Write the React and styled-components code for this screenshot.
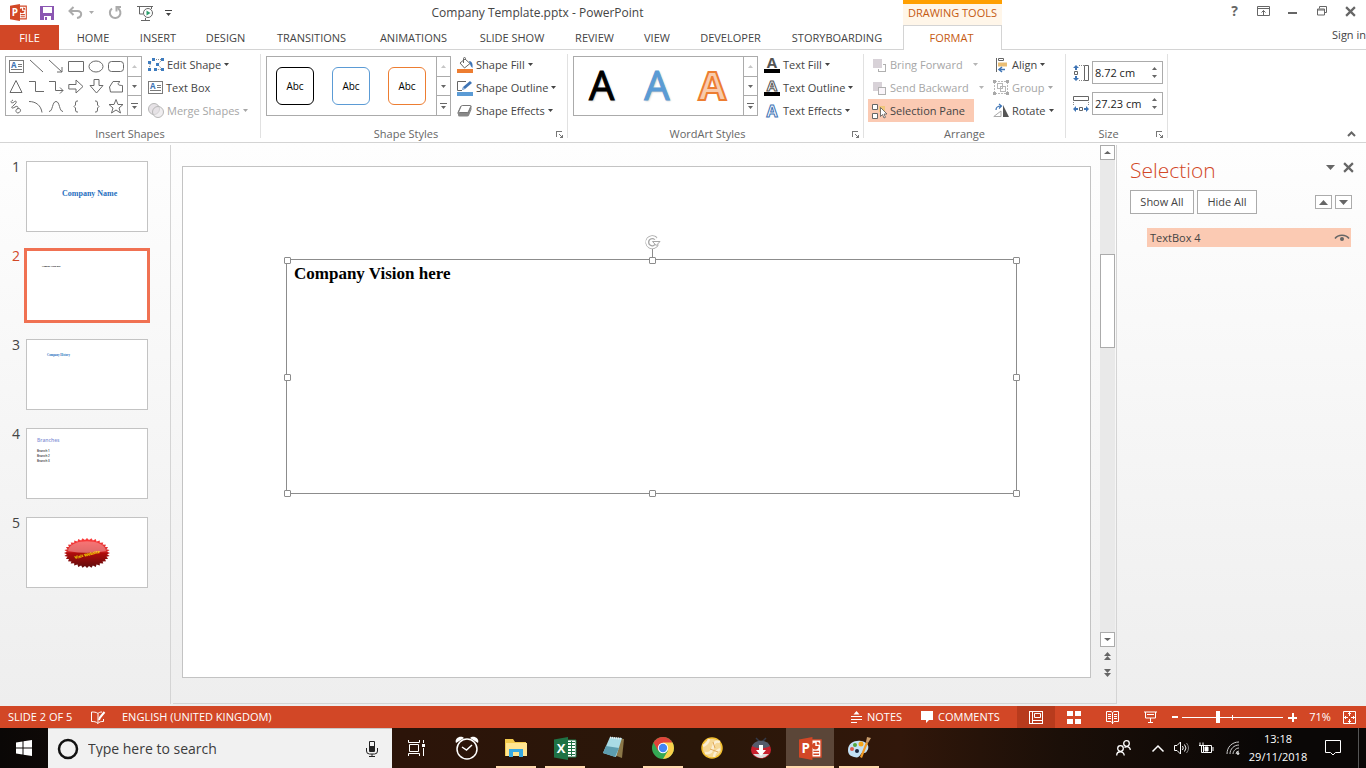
import React from 'react';
import styled, { createGlobalStyle, css } from 'styled-components';

const Global = createGlobalStyle`
  *, *::before, *::after { box-sizing: border-box; }
  html, body, #root { height: 100%; margin: 0; }
  body { font: 11px/16px "Open Sans", "Noto Sans", sans-serif; color: #444; background: #fff; overflow: hidden; }
  button, input { font: inherit; color: inherit; margin: 0; }
  button { padding: 0; border: 0; background: none; white-space: nowrap; }
  a { color: inherit; text-decoration: none; }
  h1, h2, p, ul, ol { margin: 0; padding: 0; font-weight: 400; list-style: none; }
  svg { display: block; flex: none; overflow: visible; }
`;

const Window = styled.div`
  display: flex;
  flex-direction: column;
  height: 100vh;
  overflow: hidden;
`;

/* ---------- header ---------- */
const Header = styled.header`
  display: grid;
  grid-template-columns: 903px 99px 1fr;
  grid-template-rows: 25px 25px;
  flex: none;
`;
const TitleBar = styled.div`
  display: flex;
  align-items: center;
`;
const QuickAccess = styled.div`
  display: flex;
  align-items: center;
  width: 180px;
  height: 22px;
  padding-left: 9px;
`;
const QuickButton = styled.button`
  display: flex;
  align-items: center;
  justify-content: center;
  width: ${(p) => p.$w}px;
  height: 20px;
  color: ${(p) => (p.disabled ? '#ababab' : '#444')};
`;
const DocTitle = styled.h1`
  flex: 1;
  padding-right: 8px;
  text-align: center;
  font-size: 12px;
  line-height: 25px;
`;
const ToolsLabel = styled.div`
  border-top: 4px solid #ff9f00;
  background: #fff6e9;
  color: #c55a11;
  text-align: center;
  line-height: 18px;
  white-space: nowrap;
`;
const WindowControls = styled.div`
  display: flex;
  justify-content: flex-end;
  align-items: center;
  height: 22px;
  padding-right: 1px;
`;
const ControlButton = styled.button`
  display: flex;
  align-items: center;
  justify-content: center;
  width: 29px;
  height: 22px;
  font-size: 14px;
  font-weight: 700;
  color: #666;
`;
const Tabs = styled.nav`
  display: flex;
  border-bottom: 1px solid #d4d4d4;
`;
const Tab = styled.a`
  width: ${(p) => p.$w}px;
  text-align: center;
  line-height: 25px;
  white-space: nowrap;
  ${(p) => p.$file && css`
    background: #d24726;
    color: #fff;
    margin: 0 2px -1px 0;
  `}
  ${(p) => p.$active && css`
    padding-right: 2px;
    border: 1px solid #d4d4d4;
    border-bottom: 0;
    color: #c55a11;
    line-height: 24px;
  `}
`;
const SignInBar = styled.div`
  display: flex;
  justify-content: flex-end;
  border-bottom: 1px solid #d4d4d4;
  line-height: 20px;
`;

/* ---------- ribbon ---------- */
const Ribbon = styled.section`
  display: flex;
  flex: none;
  padding-top: 3px;
  border-bottom: 1px solid #d4d4d4;
  background: #fff;
`;
const GroupBox = styled.section`
  display: flex;
  flex-direction: column;
  width: ${(p) => p.$w}px;
`;
const Separator = styled.div`
  width: 1px;
  margin: 1px 0 4px;
  background: #e1e1e1;
`;
const GroupBody = styled.div`
  display: flex;
  height: 69px;
  padding-left: ${(p) => p.$pad}px;
`;
const GroupFooter = styled.div`
  display: flex;
  height: 20px;
  line-height: 24px;
  color: #666;
`;
const GroupName = styled.h2`
  flex: 1;
  font-size: 11px;
  text-align: center;
`;
const Launcher = styled.button`
  width: 16px;
  height: 20px;
  padding: 5px 0 0 5px;
`;
const Gallery = styled.div`
  display: flex;
  height: 60px;
  margin: 3px 3px 0 0;
  border: 1px solid #ababab;
`;
const ShapeGrid = styled.div`
  display: grid;
  grid-template-columns: repeat(6, 20px);
  grid-auto-rows: 20px;
  width: 121px;
  height: 58px;
  overflow: hidden;
`;
const ShapeButton = styled.button`
  display: flex;
  align-items: center;
  justify-content: center;
  padding-bottom: 2px;
`;
const StyleRow = styled.div`
  display: flex;
  align-items: center;
  gap: 18px;
  width: 169px;
  padding-left: 9px;
`;
const StyleSample = styled.button`
  width: 38px;
  height: 38px;
  border: 1px solid ${(p) => p.$c};
  border-radius: 6px;
  color: #000;
  font-size: 10px;
  line-height: 36px;
`;
const ArtRow = styled.div`
  display: flex;
  width: 169px;
  padding-right: 3px;
`;
const ArtSample = styled.button`
  flex: 1;
  height: 58px;
  padding-bottom: 2px;
  font-size: 40px;
  line-height: 56px;
  color: ${(p) => p.$fill};
  -webkit-text-stroke: ${(p) => (p.$line ? `2px ${p.$line}` : `1px ${p.$fill}`)};
  font-weight: ${(p) => (p.$line ? 700 : 400)};
  text-shadow: ${(p) => (p.$line ? 'none' : '1px 1px 2px #bbb')};
`;
const GalleryScroll = styled.div`
  display: flex;
  flex-direction: column;
  width: 14px;
  border-left: 1px solid #ababab;
`;
const GalleryArrow = styled.button`
  display: flex;
  align-items: center;
  justify-content: center;
  flex: 1;
  color: ${(p) => (p.disabled ? '#c6c6c6' : '#666')};
  & + & { border-top: 1px solid #ababab; }
`;
const CommandColumn = styled.div`
  display: flex;
  flex-direction: column;
  align-items: flex-start;
  width: ${(p) => (p.$w ? `${p.$w}px` : 'auto')};
`;
const CommandRow = styled.div`
  display: flex;
`;
const Command = styled.button`
  display: flex;
  align-items: center;
  gap: 3px;
  height: 23px;
  padding: 0 ${(p) => (p.$on ? 9 : 3)}px 0 3px;
  color: ${(p) => (p.disabled ? '#a6a6a6' : '#444')};
  background: ${(p) => (p.$on ? '#fbcab3' : 'none')};
`;
const SplitArrow = styled.button`
  display: flex;
  align-items: center;
  height: 23px;
  padding-left: 7px;
  color: #b5b5b5;
`;
const SizeFields = styled.div`
  display: flex;
  flex-direction: column;
  gap: 8px;
  padding-top: 8px;
`;
const SizeField = styled.label`
  display: flex;
  align-items: center;
  gap: 3px;
`;
const SpinBox = styled.span`
  display: flex;
  width: 71px;
  height: 23px;
  border: 1px solid #ababab;
`;
const SizeInput = styled.input`
  width: 54px;
  padding: 0 2px;
  border: 0;
  outline: 0;
  background: none;
  color: #222;
  font-size: 11px;
`;
const Spinner = styled.span`
  display: flex;
  flex-direction: column;
  justify-content: space-evenly;
  align-items: center;
  width: 15px;
  color: #666;
`;
const CollapseArea = styled.div`
  display: flex;
  flex: 1;
  justify-content: flex-end;
  align-items: flex-end;
  padding: 0 10px 5px 0;
`;

/* ---------- workspace ---------- */
const Workspace = styled.main`
  display: flex;
  flex: 1;
  min-height: 0;
  background: linear-gradient(#fefefe, #eee);
`;
const Thumbnails = styled.ol`
  display: flex;
  flex-direction: column;
  gap: 18px;
  width: 171px;
  margin: 2px 0;
  padding: 16px 0 0;
  border-right: 1px solid #d4d4d4;
`;
const ThumbItem = styled.li`
  display: flex;
  color: ${(p) => (p.$on ? '#d24726' : '#444')};
`;
const ThumbNumber = styled.span`
  width: 26px;
  padding-right: 6px;
  text-align: right;
  font-size: 14px;
  line-height: 12px;
`;
const Thumb = styled.button`
  display: flex;
  flex-direction: column;
  align-items: flex-start;
  width: 122px;
  height: 71px;
  padding: ${(p) => p.$pad || '0'};
  border: 1px solid ${(p) => (p.$on ? '#f07152' : '#c3c3c3')};
  box-shadow: ${(p) => (p.$on ? '0 0 0 2px #f07152' : 'none')};
  background: #fff;
`;
const ThumbText = styled.span`
  font-family: ${(p) => (p.$sans ? '"Open Sans", sans-serif' : '"Liberation Serif", serif')};
  font-weight: ${(p) => (p.$sans ? 600 : 700)};
  font-size: ${(p) => p.$s}px;
  line-height: ${(p) => p.$lh}px;
  color: ${(p) => p.$c};
`;
const Editor = styled.section`
  display: flex;
  flex: 1;
  min-width: 0;
  margin: 2px 0 2px 2px;
  border-bottom: 1px solid #d4d4d4;
  border-right: 1px solid #d4d4d4;
`;
const SlideArea = styled.div`
  display: flex;
  flex: 1;
  padding: 21px 9px 25px;
`;
const Slide = styled.div`
  flex: 1;
  border: 1px solid #c3c3c3;
  background: #fff;
`;
const TextFrame = styled.div`
  position: relative;
  height: 235px;
  margin: 92px 73px 0 103px;
  padding: 4px 7px;
  border: 1px solid #8c8c8c;
`;
const SlideText = styled.p`
  font: 700 17px/20px "Liberation Serif", serif;
  color: #000;
`;
const Handle = styled.span`
  position: absolute;
  left: ${(p) => p.$x};
  top: ${(p) => p.$y};
  width: 7px;
  height: 7px;
  margin: -3px;
  border: 1px solid #8c8c8c;
  border-radius: 1px;
  background: #fff;
`;
const RotateHandle = styled.svg`
  position: absolute;
  left: 50%;
  top: -25px;
  margin-left: -9px;
`;
const ScrollColumn = styled.div`
  display: flex;
  flex-direction: column;
  align-items: center;
  width: 16px;
  padding: 0 1px 22px 0;
  color: #666;
`;
const ScrollTrack = styled.div`
  flex: 1;
  width: 15px;
  padding-top: 94px;
  background: #e9e9e9;
`;
const ScrollThumb = styled.div`
  height: 94px;
  border: 1px solid #ababab;
  background: #fff;
`;
const ScrollButton = styled.button`
  display: flex;
  align-items: center;
  justify-content: center;
  width: 15px;
  height: 15px;
  border: 1px solid #ababab;
  background: #fff;
`;
const PageButton = styled.button`
  display: flex;
  align-items: center;
  justify-content: center;
  height: 17px;
`;

/* ---------- selection pane ---------- */
const Pane = styled.aside`
  width: 249px;
  padding: 14px 12px 0 13px;
`;
const PaneHead = styled.div`
  display: flex;
  align-items: center;
  gap: 8px;
  height: 26px;
  padding-bottom: 6px;
`;
const PaneTitle = styled.h2`
  flex: 1;
  padding-top: 6px;
  font-size: 21px;
  font-weight: 300;
  line-height: 26px;
  color: #d24726;
`;
const PaneActions = styled.div`
  display: flex;
  align-items: center;
  gap: 3px;
  margin-top: 7px;
  padding-right: 2px;
`;
const PaneButton = styled.button`
  width: ${(p) => p.$w}px;
  height: 24px;
  border: 1px solid #ababab;
  background: #fff;
`;
const OrderButtons = styled.div`
  display: flex;
  flex: 1;
  justify-content: flex-end;
  gap: 3px;
`;
const OrderButton = styled.button`
  display: flex;
  align-items: center;
  justify-content: center;
  width: 17px;
  height: 14px;
  border: 1px solid #ababab;
  background: #fff;
  color: #666;
`;
const ObjectRow = styled.div`
  display: flex;
  justify-content: space-between;
  align-items: center;
  height: 19px;
  margin: 14px 3px 0 17px;
  padding: 0 1px 0 3px;
  background: #fbcab3;
`;

/* ---------- status bar ---------- */
const StatusBar = styled.footer`
  display: flex;
  align-items: center;
  flex: none;
  height: 22px;
  padding: 0 10px 0 8px;
  background: #d24726;
  color: #fff;
  white-space: nowrap;
`;
const StatusItem = styled.button`
  display: flex;
  align-items: center;
  gap: 5px;
  width: ${(p) => (p.$w ? `${p.$w}px` : 'auto')};
`;
const StatusSpace = styled.div`
  flex: 1;
`;
const ViewButton = styled.button`
  display: flex;
  align-items: center;
  justify-content: center;
  width: 38px;
  height: 22px;
  background: ${(p) => (p.$on ? '#b83b1d' : 'none')};
`;
const Zoom = styled.input`
  appearance: none;
  width: 101px;
  height: 14px;
  margin: 0 5px 0 3px;
  background:
    linear-gradient(#fff, #fff) 50% 50% / 1px 5px no-repeat,
    linear-gradient(#fff, #fff) 50% 50% / 100% 1px no-repeat;
  &::-webkit-slider-thumb {
    appearance: none;
    width: 4px;
    height: 12px;
    background: #fff;
  }
`;
const ZoomValue = styled.button`
  width: 46px;
  text-align: center;
`;

/* ---------- task bar ---------- */
const TaskBar = styled.footer`
  display: flex;
  flex: none;
  height: 40px;
  background: linear-gradient(90deg, #0a0706 0, #2c1409 400px, #2a1709 700px, #31170a 900px, #1b0f08 1060px, #0a0706 1260px);
  color: #fff;
`;
const StartButton = styled.button`
  display: flex;
  align-items: center;
  justify-content: center;
  width: 48px;
`;
const SearchBox = styled.label`
  display: flex;
  align-items: center;
  width: 344px;
  padding: 0 14px 0 9px;
  border-top: 1px solid #c8c8c8;
  background: #f1f1f1;
`;
const SearchInput = styled.input`
  flex: 1;
  min-width: 0;
  margin-left: 9px;
  padding: 0;
  border: 0;
  outline: 0;
  background: none;
  font-size: 14px;
  &::placeholder { color: #3c3c3c; opacity: 1; }
`;
const Apps = styled.div`
  display: flex;
  gap: 1px;
  flex: 1;
`;
const AppButton = styled.button`
  display: flex;
  align-items: center;
  justify-content: center;
  width: 48px;
  margin-right: ${(p) => p.$gap || 0}px;
  background-color: ${(p) => (p.$on ? '#5b4638' : 'transparent')};
  background-image: ${(p) => (p.$open ? 'linear-gradient(#ffd9ad, #ffd9ad)' : 'none')};
  background-size: ${(p) => (p.$on ? '48px' : '40px')} 2px;
  background-position: 50% 100%;
  background-repeat: no-repeat;
`;
const Tray = styled.div`
  display: flex;
  align-items: center;
`;
const TrayButton = styled.button`
  display: flex;
  align-items: center;
  justify-content: center;
  width: ${(p) => p.$w}px;
  height: 40px;
`;
const Clock = styled.button`
  width: 60px;
  text-align: center;
  line-height: 18px;
`;
const DesktopPeek = styled.div`
  width: 8px;
  height: 40px;
  border-left: 1px solid #555;
`;

/* ---------- icons ---------- */
const Svg = ({ w = 16, h = w, children, ...rest }) => (
  <svg width={w} height={h} viewBox={`0 0 ${w} ${h}`} fill="none" aria-hidden="true" {...rest}>{children}</svg>
);
const Down = ({ w = 5 }) => (
  <svg width={w} height="3" viewBox="0 0 5 3" preserveAspectRatio="none" fill="currentColor" aria-hidden="true"><path d="M0 0h5L2.5 3z" /></svg>
);
const Up = ({ w = 5 }) => (
  <svg width={w} height="3" viewBox="0 0 5 3" preserveAspectRatio="none" fill="currentColor" aria-hidden="true"><path d="M0 3h5L2.5 0z" /></svg>
);
const BarDown = () => (
  <Svg w={7} h={6} fill="currentColor"><path d="M0 0h7v1H0zM1 3h5L3.5 6z" /></Svg>
);
const PptIcon = ({ s = 17 }) => (
  <svg width={s} height={s} viewBox="0 0 24 24" fill="none" aria-hidden="true">
    <path d="M13 3h10v18H13z" fill="#fff" stroke="#d24726" strokeWidth="1.5" />
    <path d="M15 15h6M15 18h6" stroke="#d24726" strokeWidth="1.5" />
    <path d="M17 6a3.500 3.500 0 1 0 3.500 3.500H17z" fill="#d24726" /><path d="M18.5 5v3.200h3.200A3.200 3.200 0 0 0 18.500 5z" fill="#d24726" />
    <path d="M0 2.500 14 0v24L0 21.500z" fill="#d24726" />
    <text x="7" y="17" textAnchor="middle" fontFamily="Open Sans, sans-serif" fontWeight="700" fontSize="14" fill="#fff">P</text>
  </svg>
);
const ExcelIcon = () => (
  <Svg w={23} h={23}>
    <path d="M12 3h10v17H12z" fill="#fff" stroke="#1f7245" />
    <path d="M13 5.500h8M13 8.500h8M13 11.500h8M13 14.500h8M13 17.500h8M17.500 4v15" stroke="#1f7245" />
    <path d="M0 2.500 14 0v23L0 20.500z" fill="#1f7245" />
    <text x="7" y="16" textAnchor="middle" fontFamily="Open Sans, sans-serif" fontWeight="700" fontSize="13" fill="#fff">X</text>
  </Svg>
);
const SaveIcon = () => (
  <Svg w={14} h={14}><path d="M0 0h14v14H0z" fill="#8b57b2" /><path d="M3 1h9v6H3zM4 10h7v4H4z" fill="#fff" /><path d="M5 11h2v3H5z" fill="#8b57b2" /></Svg>
);
const UndoIcon = () => (
  <Svg w={16} h={13}><path d="M5.500 1 1.500 5l4 4M2 5h7.500c5 0 5 6-.5 7" stroke="#ababab" strokeWidth="2" /></Svg>
);
const RedoIcon = () => (
  <Svg w={14} h={13}><path d="M4 2.500A5.300 5.300 0 1 0 9.500 2" stroke="#ababab" strokeWidth="2" /><path d="M8.500 5.500V1H13" stroke="#ababab" strokeWidth="2" /></Svg>
);
const PresentIcon = () => (
  <Svg w={17} h={16}><path d="M0 1.500h16M2.500 2v7H6M14.500 2v2M8.500 13v2.500M4 15.500h9" stroke="#666" /><circle cx="11" cy="8" r="4.500" fill="#fff" stroke="#666" /><path d="m9.500 5.500 4 2.500-4 2.500z" fill="#2f9e6e" /></Svg>
);
const TextBoxIcon = () => (
  <Svg w={15} h={13} shapeRendering="crispEdges"><path d="M.5.500h14v12H.5zM9 4.500h4M9 6.500h4M2 9.500h11" stroke="#7a7a7a" /><text x="2" y="8" fontFamily="Open Sans, sans-serif" fontWeight="700" fontSize="8" fill="#3e74b5">A</text></Svg>
);
const EditShapeIcon = () => (
  <Svg w={16} h={15}><path d="M6 2.500h8l-4 5 4 5H7" stroke="#888" strokeDasharray="1 1" /><path d="m1 12 2-8" stroke="#888" strokeDasharray="1 1" /><path d="M4 1h3v3H4zM13 1h3v3h-3zM8 6h3v3H8zM0 11h3v3H0zM13 11h3v3h-3zM6 11h3v3H6zM0 4h3v3H0z" fill="#3e7cbf" /></Svg>
);
const MergeIcon = () => (
  <Svg w={16} h={15}><circle cx="6" cy="6" r="5.500" fill="#e6e2e6" stroke="#b8b8b8" /><circle cx="10" cy="9" r="5.500" fill="#e6e2e6" fillOpacity=".6" stroke="#b8b8b8" /></Svg>
);
const ShapeFillIcon = () => (
  <Svg w={16} h={16}><path d="m3 6 5-4 5 4.500L7.500 11z" fill="#fff" stroke="#666" /><path d="M6.500 6V1.500a1 1 0 0 1 2 0V3" stroke="#666" /><path d="M12 4c3 0 4 3 3.500 7-1-1-2-2-2.500-4z" fill="#3e74b5" /><path d="M0 12h16v4H0z" fill="#ed7d31" /></Svg>
);
const ShapeOutlineIcon = () => (
  <Svg w={16} h={16}><path d="M9 1.500H.5v9H5" stroke="#666" /><path d="m5 10 1-3 7-6 2 2-7 6z" fill="#3e74b5" /><path d="m5 10 1-3 2 2z" fill="#9cbbe0" /><path d="M0 12h16v4H0z" fill="#5b9bd5" /></Svg>
);
const EffectsIcon = () => (
  <Svg w={16} h={15}>
    <path d="M5 2.500h8.500q1.500 0 1 1.500l-2.500 6q-.5 1-2 1H1.500q-1.500 0-1-1.500L3 4q.5-1.500 2-1.500z" fill="#777" />
    <path d="M1 9v3q0 1.500 1.500 1.500H10q1.500 0 2-1l2.500-6V4l-3 6z" fill="#888" />
    <path d="M5.500 2.500h7.500q1 0 .7 1L11.500 8.500q-.5 1-1.500 1H2.500q-1 0-.7-1L4 3.500q.5-1 1.500-1z" fill="#fff" stroke="#777" />
  </Svg>
);
const LetterIcon = ({ fill, line, bar, s = 15, y = 11 }) => (
  <Svg w={16} h={16}><text x="8" y={y} textAnchor="middle" fontFamily="Open Sans, sans-serif" fontWeight="700" fontSize={s} fill={fill} stroke={line} strokeWidth={line ? 1 : 0}>A</text>{bar && <path d="M0 12h16v4H0z" fill={bar} />}</Svg>
);
const ForwardIcon = () => (
  <Svg w={16} h={16} shapeRendering="crispEdges"><path d="M2 2h9v9H2z" fill="#d8d2d8" /><path d="M12 7.500h2.500v7h-7V12" stroke="#b0b0b0" /></Svg>
);
const BackwardIcon = () => (
  <Svg w={16} h={16} shapeRendering="crispEdges"><path d="M2 2h9v9H2z" fill="#d8d2d8" /><path d="M7.500 7.500h7v7h-7z" fill="#faf5fa" stroke="#b0b0b0" /></Svg>
);
const SelectionIcon = () => (
  <Svg w={16} h={16}><path d="M1.500 1.500h5v5h-5zM1.500 10.500h5v5h-5z" fill="#fff" stroke="#666" /><path d="M8 3h6v6H8z" fill="#f0c77c" /><path d="M9.500 4.500v9l2-2 1.500 3.500 1.500-.7-1.500-3.300H16z" fill="#fff" stroke="#555" strokeWidth=".8" /></Svg>
);
const AlignIcon = () => (
  <Svg w={16} h={16}><path d="M3.500 1v14" stroke="#666" /><path d="M5.500 1.500h5v2h-5z" stroke="#666" /><path d="M5 5.500h9v4H5z" fill="#e9bd73" /><path d="M12 12.500H6m3-2.500-3 2.500L9 15" stroke="#3e74b5" strokeWidth="1.500" /></Svg>
);
const GroupIcon = () => (
  <Svg w={16} h={15} shapeRendering="crispEdges"><path d="M2 1.500h12M2 13.500h12M1.500 2v11M14.500 2v11" stroke="#b8b8b8" strokeDasharray="2 1" /><path d="M4.500 3.500h5v5h-5zM7.500 6.500h5v5h-5z" stroke="#b8b8b8" /><path d="M0 0h3v3H0zM13 0h3v3h-3zM0 12h3v3H0zM13 12h3v3h-3z" fill="#a9a9a9" /></Svg>
);
const RotateIcon = () => (
  <Svg w={16} h={14}><path d="M.8 12.500H8V7z" stroke="#aaa" /><path d="M10 1v12h6z" fill="#555" /><path d="M3 6c0-3 2-4 5-4M6 0l2.500 2L6 4.500" stroke="#3e74b5" strokeWidth="1.200" /></Svg>
);
const HeightIcon = () => (
  <Svg w={16} h={16}><path d="M11.500.500h4v15h-4zM1.500 6.500h3v3h-3z" stroke="#666" /><path d="M6 .5h5M6 15.500h5" stroke="#888" strokeDasharray="1 1" /><path d="M3 0 0 3h2v2h2V3h2zM3 16l-3-3h2v-2h2v2h2z" fill="#3e74b5" /></Svg>
);
const WidthIcon = () => (
  <Svg w={16} h={16}><path d="M.5.500h15v4H.5zM6.500 11.500h3v3h-3z" stroke="#666" /><path d="M.5 6v4M15.500 6v4" stroke="#888" strokeDasharray="1 1" /><path d="m0 13 3-3v2h2v2H3v2zM16 13l-3-3v2h-2v2h2v2z" fill="#3e74b5" /></Svg>
);
const LauncherIcon = () => (
  <Svg w={8} h={8} shapeRendering="crispEdges"><path d="M.5 6V.500H6" stroke="#777" /><path d="M3 3l3 3" stroke="#777" /><path d="M7 3v4H3z" fill="#777" /></Svg>
);
const Close = ({ s = 11 }) => (
  <svg width={s} height={s} viewBox="0 0 10 10" aria-hidden="true"><path d="m1 1 8 8M9 1 1 9" stroke="#666" strokeWidth="2" /></svg>
);

const shapes = [
  ['Text box', <TextBoxIcon />],
  ['Line', <path d="m2 2 13 12" />],
  ['Arrow', <path d="m1 2 13 12M14 9v5H9" />],
  ['Rectangle', <path d="M.5 3.500h15v10H.5z" />],
  ['Oval', <ellipse cx="8" cy="8.500" rx="7" ry="5.500" />],
  ['Rounded rectangle', <rect x=".5" y="3.500" width="15" height="10" rx="3" />],
  ['Triangle', <path d="m8 2.500 6 12H2z" />],
  ['Elbow', <path d="M1 3.500h6.500v10H16" />],
  ['Elbow arrow', <path d="M1 3.500h6.500v9H15M12 9.500l3 3-3 3" />],
  ['Right arrow', <path d="M.8 6.500H8V2l7 6.500L8 15v-4H.8z" />],
  ['Down arrow', <path d="M6 1.500h5v6h4L8.500 15 2 7.500h4z" />],
  ['Freeform', <path d="M5 3.500h7c-4 3-1 4 2.500 4v6.500H2.500L1.500 9z" />],
  ['Scribble', <path d="M5 2C1 4 4 6 6 4s4 0 0 3-2 4 1 2 4 1 2 2-1 4 1 4c4-1 3-6-1-4" />],
  ['Arc', <path d="M1 3.500c7 0 12 4 13 11" />],
  ['Curve', <path d="M1 13.500c4 0 3-10 7-10s3 10 7 10" />],
  ['Left brace', <path d="M10 3H9Q7.500 3 7.500 5v2L6 8.500 7.500 10v2q0 2 1.500 2h1" />],
  ['Right brace', <path d="M7 3h1q1.500 0 1.500 2v2L11 8.500 9.500 10v2q0 2-1.500 2H7" />],
  ['Star', <path d="m8 1.500 2 5h5l-4 3.500 1.500 5L8 12l-4.500 3L5 10 1 6.500h5z" />],
];

const tabs = [
  ['FILE', 59], ['HOME', 64], ['INSERT', 66], ['DESIGN', 69], ['TRANSITIONS', 103], ['ANIMATIONS', 101],
  ['SLIDE SHOW', 96], ['REVIEW', 69], ['VIEW', 56], ['DEVELOPER', 91], ['STORYBOARDING', 122],
];

function Group({ name, w, pad = 5, launcher, children }) {
  return (
    <>
      <GroupBox $w={w}>
        <GroupBody $pad={pad}>{children}</GroupBody>
        <GroupFooter>
          <GroupName>{name}</GroupName>
          {launcher && <Launcher aria-label={`${name} options`}><LauncherIcon /></Launcher>}
        </GroupFooter>
      </GroupBox>
      <Separator />
    </>
  );
}

function Scroller() {
  return (
    <GalleryScroll>
      <GalleryArrow disabled aria-label="Previous row"><Up /></GalleryArrow>
      <GalleryArrow aria-label="Next row"><Down /></GalleryArrow>
      <GalleryArrow aria-label="More"><BarDown /></GalleryArrow>
    </GalleryScroll>
  );
}

function Cmd({ icon, children, arrow = true, ...rest }) {
  return <Command {...rest}>{icon}<span>{children}</span>{arrow && <Down />}</Command>;
}

function Size({ icon, label, value }) {
  return (
    <SizeField>
      {icon}
      <SpinBox>
        <SizeInput aria-label={label} defaultValue={value} />
        <Spinner><Up /><Down /></Spinner>
      </SpinBox>
    </SizeField>
  );
}

function RibbonBar() {
  return (
    <Ribbon>
      <Group name="Insert Shapes" w={260}>
        <Gallery>
          <ShapeGrid>
            {shapes.map(([name, art], i) => (
              <ShapeButton key={name} aria-label={name}>{i === 0 ? art : <Svg w={16} stroke="#6a6a6a">{art}</Svg>}</ShapeButton>
            ))}
          </ShapeGrid>
          <Scroller />
        </Gallery>
        <CommandColumn>
          <Cmd icon={<EditShapeIcon />}>Edit Shape</Cmd>
          <Cmd icon={<TextBoxIcon />} arrow={false}>Text Box</Cmd>
          <Cmd icon={<MergeIcon />} disabled>Merge Shapes</Cmd>
        </CommandColumn>
      </Group>
      <Group name="Shape Styles" w={306} launcher>
        <Gallery>
          <StyleRow>
            <StyleSample $c="#000">Abc</StyleSample>
            <StyleSample $c="#5b9bd5">Abc</StyleSample>
            <StyleSample $c="#ed7d31">Abc</StyleSample>
          </StyleRow>
          <Scroller />
        </Gallery>
        <CommandColumn>
          <Cmd icon={<ShapeFillIcon />}>Shape Fill</Cmd>
          <Cmd icon={<ShapeOutlineIcon />}>Shape Outline</Cmd>
          <Cmd icon={<EffectsIcon />}>Shape Effects</Cmd>
        </CommandColumn>
      </Group>
      <Group name="WordArt Styles" w={295} launcher>
        <Gallery>
          <ArtRow>
            <ArtSample $fill="#000">A</ArtSample>
            <ArtSample $fill="#5b9bd5">A</ArtSample>
            <ArtSample $fill="#f8cbad" $line="#ed7d31">A</ArtSample>
          </ArtRow>
          <Scroller />
        </Gallery>
        <CommandColumn>
          <Cmd icon={<LetterIcon fill="#555" bar="#000" />}>Text Fill</Cmd>
          <Cmd icon={<LetterIcon fill="#fff" line="#555" bar="#000" />}>Text Outline</Cmd>
          <Cmd icon={<LetterIcon fill="#fff" line="#3e74b5" s={16} y={14} />}>Text Effects</Cmd>
        </CommandColumn>
      </Group>
      <Group name="Arrange" w={201} pad={4}>
        <CommandColumn $w={122}>
          <CommandRow><Cmd icon={<ForwardIcon />} arrow={false} disabled>Bring Forward</Cmd><SplitArrow aria-label="Bring forward options"><Down /></SplitArrow></CommandRow>
          <CommandRow><Cmd icon={<BackwardIcon />} arrow={false} disabled>Send Backward</Cmd><SplitArrow aria-label="Send backward options"><Down /></SplitArrow></CommandRow>
          <Cmd icon={<SelectionIcon />} arrow={false} $on>Selection Pane</Cmd>
        </CommandColumn>
        <CommandColumn>
          <Cmd icon={<AlignIcon />}>Align</Cmd>
          <Cmd icon={<GroupIcon />} disabled>Group</Cmd>
          <Cmd icon={<RotateIcon />}>Rotate</Cmd>
        </CommandColumn>
      </Group>
      <Group name="Size" w={101} pad={7} launcher>
        <SizeFields>
          <Size icon={<HeightIcon />} label="Height" value="8.72 cm" />
          <Size icon={<WidthIcon />} label="Width" value="27.23 cm" />
        </SizeFields>
      </Group>
      <CollapseArea>
        <button aria-label="Collapse ribbon"><Svg w={9} h={6}><path d="m1 5 3.500-3.500L8 5" stroke="#666" strokeWidth="2" /></Svg></button>
      </CollapseArea>
    </Ribbon>
  );
}

const starburst = Array.from({ length: 64 }, (_, i) => {
  const a = (i / 64) * Math.PI * 2;
  const r = i % 2 ? 0.88 : 1;
  return `${(23 + 23 * r * Math.cos(a)).toFixed(1)},${(15 + 15 * r * Math.sin(a)).toFixed(1)}`;
}).join(' ');

function Slides() {
  const items = [
    { pad: '27px 0 0 35px', body: <ThumbText $s={8} $lh={10} $c="#1f6fc0">Company Name</ThumbText> },
    { on: true, pad: '13px 0 0 15px', body: <ThumbText $s={2} $lh={4} $c="#000">Company Vision here</ThumbText> },
    { pad: '13px 0 0 20px', body: <ThumbText $s={3} $lh={5} $c="#1f6fc0">Company History</ThumbText> },
    {
      pad: '7px 0 0 10px',
      body: (
        <>
          <ThumbText $sans $s={5} $lh={8} $c="#8593d6">Branches</ThumbText>
          <ThumbText $sans $s={3} $lh={5} $c="#333">&nbsp;</ThumbText>
          <ThumbText $sans $s={3} $lh={5} $c="#333">Branch 1</ThumbText>
          <ThumbText $sans $s={3} $lh={5} $c="#333">Branch 2</ThumbText>
          <ThumbText $sans $s={3} $lh={5} $c="#333">Branch 3</ThumbText>
        </>
      ),
    },
    {
      pad: '20px 0 0 37px',
      body: (
        <Svg w={46} h={30}>
          <defs><linearGradient id="badge" x2="0" y2="1"><stop stopColor="#ff3d3d" /><stop offset=".45" stopColor="#d42a2a" /><stop offset=".5" stopColor="#b00c0c" /><stop offset="1" stopColor="#5e0c0c" /></linearGradient></defs>
          <polygon points={starburst} fill="url(#badge)" />
          <path d="M4 13C5 0 41 0 42 13Q23 17 4 13z" fill="#fff" fillOpacity=".3" />
          <text x="23" y="18" textAnchor="middle" transform="rotate(-14 23 16)" fontFamily="Open Sans, sans-serif" fontWeight="700" fontSize="4" fill="#ffe600">Visit Website</text>
        </Svg>
      ),
    },
  ];
  return (
    <Thumbnails>
      {items.map((t, i) => (
        <ThumbItem key={i} $on={t.on}>
          <ThumbNumber>{i + 1}</ThumbNumber>
          <Thumb $on={t.on} $pad={t.pad} aria-label={`Slide ${i + 1}`}>{t.body}</Thumb>
        </ThumbItem>
      ))}
    </Thumbnails>
  );
}

const handles = [['0%', '0%'], ['50%', '0%'], ['100%', '0%'], ['0%', '50%'], ['100%', '50%'], ['0%', '100%'], ['50%', '100%'], ['100%', '100%']];

function SlideEditor() {
  return (
    <Editor>
      <SlideArea>
        <Slide>
          <TextFrame>
            <SlideText>Company Vision here</SlideText>
            <RotateHandle width="18" height="26" viewBox="0 0 18 26" fill="none" aria-hidden="true">
              <path d="M9.500 14v10" stroke="#8c8c8c" />
              <path d="M14 9A5 5 0 1 1 13 3.700" stroke="#a6a6a6" strokeWidth="4" />
              <path d="M14 9.200A5.200 5.200 0 1 1 13 3.700" stroke="#fff" strokeWidth="2" />
              <path d="M9.500 6.500h7.500L13.200 10.500z" fill="#fff" stroke="#a6a6a6" />
            </RotateHandle>
            {handles.map(([x, y]) => <Handle key={x + y} $x={x} $y={y} />)}
          </TextFrame>
        </Slide>
      </SlideArea>
      <ScrollColumn>
        <ScrollButton aria-label="Scroll up"><Up w={7} /></ScrollButton>
        <ScrollTrack><ScrollThumb /></ScrollTrack>
        <ScrollButton aria-label="Scroll down"><Down w={7} /></ScrollButton>
        <PageButton aria-label="Previous slide"><Svg w={7} h={8} fill="currentColor"><path d="M0 4h7L3.500 0zM0 8h7L3.500 4z" /></Svg></PageButton>
        <PageButton aria-label="Next slide"><Svg w={7} h={8} fill="currentColor"><path d="M0 0h7L3.500 4zM0 4h7L3.500 8z" /></Svg></PageButton>
      </ScrollColumn>
    </Editor>
  );
}

function SelectionPane() {
  return (
    <Pane>
      <PaneHead>
        <PaneTitle>Selection</PaneTitle>
        <button aria-label="Pane options"><Svg w={9} h={5} fill="#666"><path d="M0 0h9L4.500 5z" /></Svg></button>
        <button aria-label="Close pane"><Close /></button>
      </PaneHead>
      <PaneActions>
        <PaneButton $w={64}>Show All</PaneButton>
        <PaneButton $w={60}>Hide All</PaneButton>
        <OrderButtons>
          <OrderButton aria-label="Bring forward"><Svg w={9} h={5} fill="#666"><path d="M0 5h9L4.500 0z" /></Svg></OrderButton>
          <OrderButton aria-label="Send backward"><Svg w={9} h={5} fill="#666"><path d="M0 0h9L4.500 5z" /></Svg></OrderButton>
        </OrderButtons>
      </PaneActions>
      <ObjectRow>
        <span>TextBox 4</span>
        <button aria-label="Hide TextBox 4"><Svg w={16} h={8}><path d="M1 4.500C4 0 12 0 15 4.500" stroke="#666" strokeWidth="1.500" /><circle cx="8" cy="5" r="2" fill="#666" /></Svg></button>
      </ObjectRow>
    </Pane>
  );
}

function Status() {
  return (
    <StatusBar>
      <StatusItem $w={83}>SLIDE 2 OF 5</StatusItem>
      <StatusItem $w={31} aria-label="Spelling"><Svg w={15} h={13} stroke="#fff"><path d="M7 2.500v10M7 2.500C5 1 3 1 .5 1v9.500c2.500 0 4.500 0 6.500 2 1.500-2 3-2 5.500-2V8M7 2.500C8 1.500 9 1 11 1" /><path d="m8 9 1-2.500L13.500 1" strokeWidth="2" /></Svg></StatusItem>
      <StatusItem>ENGLISH (UNITED KINGDOM)</StatusItem>
      <StatusSpace />
      <StatusItem $w={70}><Svg w={11} h={12} fill="#fff"><path d="M0 5h11v1H0zM0 8h11v1H0zM0 11h6v1H0zM2.500 3.500 5.500 0l3 3.500z" /></Svg>NOTES</StatusItem>
      <StatusItem $w={96}><Svg w={12} h={12} fill="#fff"><path d="M0 0h12v9H8l-3 3V9H0z" /></Svg>COMMENTS</StatusItem>
      <ViewButton $on aria-label="Normal view"><Svg w={14} h={13} fill="#fff"><path fillRule="evenodd" d="M0 0h14v13H0zM1 1v11h2V1zM4 1v8h9V1zM4 10v2h9v-2z" /><path d="M5.500 2.500h6v4h-6z" fill="#b83b1d" stroke="#fff" /></Svg></ViewButton>
      <ViewButton aria-label="Slide sorter"><Svg w={14} h={13} fill="#fff"><path d="M0 0h6v5H0zM8 0h6v5H8zM0 8h6v5H0zM8 8h6v5H8z" /></Svg></ViewButton>
      <ViewButton aria-label="Reading view"><Svg w={13} h={13} stroke="#fff"><path d="M6.500 2v11M6.500 1.500 5 .500H.5v10H5l1.500 1.500L8 10.500h4.500V.500H8zM2 3.500h3M2 5.500h3M2 7.500h3M8 3.500h3M8 5.500h3M8 7.500h3" /></Svg></ViewButton>
      <ViewButton aria-label="Slide show"><Svg w={13} h={12} stroke="#fff"><path d="M0 1h13M1.500 1v6h10V1M3 3.500h7M6.500 7v4M4 11.500h5" /></Svg></ViewButton>
      <button aria-label="Zoom out"><Svg w={10} h={10} fill="#fff"><path d="M3 4h6v2H3z" /></Svg></button>
      <Zoom type="range" min="0" max="100" defaultValue="35" aria-label="Zoom" />
      <button aria-label="Zoom in"><Svg w={9} h={9} fill="#fff"><path d="M4 0h2v9H4zM0 4h9v2H0z" /></Svg></button>
      <ZoomValue>71%</ZoomValue>
      <button aria-label="Fit slide"><Svg w={13} h={13} stroke="#fff"><path d="M.5.500h12v12H.5z" /><path d="M6.500 1v4M5 3l1.500-1.500L8 3M6.500 8v4M5 10l1.500 1.500L8 10M1 6.500h4M3 5 1.500 6.500 3 8M8 6.500h4M10 5l1.500 1.500L10 8" /></Svg></button>
    </StatusBar>
  );
}

const apps = [
  ['Alarms', false, <Svg w={24} h={24}><circle cx="12" cy="13" r="10" stroke="#fff" strokeWidth="1.500" /><path d="M1 7C-1 2 6-1 9 2zM23 7c2-5-5-8-8-5z" fill="#fff" /><path d="m7 11 4.500 3L17 9" stroke="#fff" strokeWidth="1.500" /></Svg>],
  ['File Explorer', true, <Svg w={22} h={20}><path d="M0 1h8l2 3h11v14H0z" fill="#f2c94c" /><path d="M1 5h21v13H1z" fill="#ffe591" /><path d="M4 11h14v8h-4v-5H8v5H4z" fill="#37a9e1" /></Svg>],
  ['Excel', true, <ExcelIcon />],
  ['Notepad', false, <Svg w={24} h={24}><path d="m10 2 12 1-2 19-8-3z" fill="#8b7748" /><path d="m8 1 12 1-6 19-13-4z" fill="#a9dbe5" /><path d="m4 10 13 2-4 9-12-4z" fill="#5d9daf" /><path d="M8 1.500 20 3" stroke="#eee" strokeWidth="2" strokeDasharray="1 1" /></Svg>],
  ['Chrome', true, (
    <Svg w={22} h={22}>
      <circle cx="11" cy="11" r="11" fill="#34a853" />
      <path d="M11 11 1.500 5.500A11 11 0 0 1 20.500 5.500z" fill="#e0443a" />
      <path d="M11 5.500h9.500A11 11 0 0 1 11 22l4.800-8z" fill="#fbd04b" />
      <path d="M1.500 5.500 6.200 14 11 5.500z" fill="#e0443a" />
      <circle cx="11" cy="11" r="5.200" fill="#fff" /><circle cx="11" cy="11" r="4.200" fill="#4285f4" />
    </Svg>
  )],
  ['Game', false, (
    <Svg w={22} h={22}>
      <circle cx="11" cy="11" r="10" fill="#f5d795" stroke="#f4c02f" strokeWidth="1.500" />
      <path d="M2 9q5-2 6-7M4 16q7 1 8-6t7-5M13 20q0-5 6-8" stroke="#fbeed2" strokeWidth="2.500" />
      <path d="M9 12l8 3M12 5l2 6" stroke="#e0a95c" />
    </Svg>
  )],
  ['Downloader', false, <Svg w={22} h={24}><path d="m6 2 5 5 5-5" stroke="#333a48" strokeWidth="1.500" /><ellipse cx="11" cy="14" rx="10" ry="8.500" fill="#c8202e" /><path d="M2 10c3-7 15-7 18 0-5 3-13 3-18 0z" fill="#555b6b" /><path d="M3 18q8 8 16 0z" fill="#ddd" /><path d="M9 9h4v5h3l-5 6-5-6h3z" fill="#fff" /></Svg>],
  ['PowerPoint', true, <PptIcon s={23} />],
  ['Paint', true, <Svg w={24} h={24}><path d="M1 14C1 7 8 4 14 5c7 1 9 6 6 10-2 4-4 0-6 3s-3 4-7 3-6-3-6-7z" fill="#c4e1f5" /><circle cx="5" cy="13" r="2" fill="#e05a4a" /><circle cx="8" cy="9" r="2" fill="#55a63c" /><circle cx="14" cy="8" r="2.500" fill="#f4a51c" /><circle cx="10" cy="15" r="2" fill="#1d2840" /><path d="m13 21 6-15 2 1-6 15z" fill="#f29b26" /><path d="m19 6 1-5 4 1-3 5z" fill="#c99c6b" /></Svg>],
];

function Tasks() {
  return (
    <TaskBar>
      <StartButton aria-label="Start"><Svg w={16} h={16} fill="#fff"><path d="M0 2.500 6.500 1.500v6H0zM7.500 1.300 16 0v7.500H7.500zM0 8.500h6.500v6L0 13.500zM7.500 8.500H16V16l-8.500-1.300z" /></Svg></StartButton>
      <SearchBox>
        <Svg w={22} h={22}><circle cx="11" cy="11" r="9" stroke="#111" strokeWidth="2.500" /></Svg>
        <SearchInput placeholder="Type here to search" aria-label="Search" />
        <Svg w={12} h={16}><path d="M3.500.500h5v10h-5z" stroke="#222" /><path d="M4 5h4v5H4z" fill="#222" /><path d="M.5 7v3q0 3 3 3h5q3 0 3-3V7M6 13v3M3 15.500h6" stroke="#222" /></Svg>
      </SearchBox>
      <Apps>
        <AppButton $gap={2} aria-label="Task view"><Svg w={17} h={16} stroke="#fff"><path d="M1.500 4.500h9v7h-9zM.5 0v2.500h11V0M.5 16v-2.500h11V16M15.500 0v3M15.500 8v8" /><path d="M14 4h3v3h-3z" fill="#fff" stroke="none" /></Svg></AppButton>
        {apps.map(([name, open, icon]) => <AppButton key={name} $open={open} $on={name === 'PowerPoint'} aria-label={name}>{icon}</AppButton>)}
      </Apps>
      <Tray>
        <TrayButton $w={46} aria-label="People"><Svg w={15} h={16} stroke="#fff" strokeWidth="1.300"><circle cx="10.500" cy="3.500" r="2.800" /><circle cx="4.500" cy="8.500" r="2.800" /><path d="M.7 15.500c0-5 7.500-5 7.500 0M8.500 7.500C12 5.500 14.300 7.500 14.300 10" /></Svg></TrayButton>
        <TrayButton $w={24} aria-label="Hidden icons"><Svg w={12} h={7} stroke="#fff" strokeWidth="1.500"><path d="m.5 6.500 5.500-5.500 5.500 5.500" /></Svg></TrayButton>
        <TrayButton $w={24} aria-label="Volume"><Svg w={16} h={14} stroke="#fff"><path d="M.5 4.500H3L6.500 1v12L3 9.500H.5zM8.500 5q1.500 2 0 4M10.500 3.500q3 3.500 0 7" /><path d="M12.500 2q4 5 0 10" stroke="#888" /></Svg></TrayButton>
        <TrayButton $w={24} aria-label="Battery"><Svg w={16} h={12} stroke="#fff"><path d="M5.500 3.500h8v7h-8zM15 5v4M1 3.500h5M2 .5v3M5 .5v3M3.500 4v6.500h2" /><path d="M7 5h3v4H7z" fill="#fff" /></Svg></TrayButton>
        <TrayButton $w={30} aria-label="Network"><Svg w={14} h={14} stroke="#ccc"><path d="M1 13C1 6 6 1 13 1M4 13c0-5 4-9 9-9M7 13c0-3 3-6 6-6M10 13q0-3 3-3" /><circle cx="12" cy="12.500" r="1" fill="#fff" /></Svg></TrayButton>
        <Clock>13:18<br />29/11/2018</Clock>
        <TrayButton $w={50} aria-label="Notifications"><Svg w={16} h={16} stroke="#fff"><path d="M.5.500h15v12h-5L8 15l-2.500-2.500h-5z" /></Svg></TrayButton>
        <DesktopPeek />
      </Tray>
    </TaskBar>
  );
}

export default function App() {
  return (
    <Window>
      <Global />
      <Header>
        <TitleBar>
          <QuickAccess>
            <QuickButton $w={18} aria-label="PowerPoint"><PptIcon /></QuickButton>
            <QuickButton $w={40} aria-label="Save"><SaveIcon /></QuickButton>
            <QuickButton $w={18} aria-label="Undo" disabled><UndoIcon /></QuickButton>
            <QuickButton $w={13} aria-label="Undo list" disabled><Down /></QuickButton>
            <QuickButton $w={34} aria-label="Redo"><RedoIcon /></QuickButton>
            <QuickButton $w={26} aria-label="Start from beginning"><PresentIcon /></QuickButton>
            <QuickButton $w={20} aria-label="Customize"><BarDown /></QuickButton>
          </QuickAccess>
          <DocTitle>Company Template.pptx - PowerPoint</DocTitle>
        </TitleBar>
        <ToolsLabel>DRAWING TOOLS</ToolsLabel>
        <WindowControls>
          <ControlButton aria-label="Help">?</ControlButton>
          <ControlButton aria-label="Ribbon options"><Svg w={13} h={11} stroke="#666"><path d="M.5.500h12v9H.5zM1 2.500h11M6.500 9V4.500M4.500 6.500l2-2 2 2" /></Svg></ControlButton>
          <ControlButton aria-label="Minimize"><Svg w={9} h={7} fill="#666"><path d="M0 4h9v2H0z" /></Svg></ControlButton>
          <ControlButton aria-label="Restore"><Svg w={10} h={10} stroke="#666"><path d="M2.500 2.500v-2h7v6h-2M.5 3h7v6h-7zM.5 4h7" /></Svg></ControlButton>
          <ControlButton aria-label="Close"><Close /></ControlButton>
        </WindowControls>
        <Tabs>
          {tabs.map(([t, w], i) => <Tab key={t} href="#" $w={w} $file={i === 0}>{t}</Tab>)}
        </Tabs>
        <Tab href="#" $w={99} $active>FORMAT</Tab>
        <SignInBar><a href="#">Sign in</a></SignInBar>
      </Header>
      <RibbonBar />
      <Workspace>
        <Slides />
        <SlideEditor />
        <SelectionPane />
      </Workspace>
      <Status />
      <Tasks />
    </Window>
  );
}
